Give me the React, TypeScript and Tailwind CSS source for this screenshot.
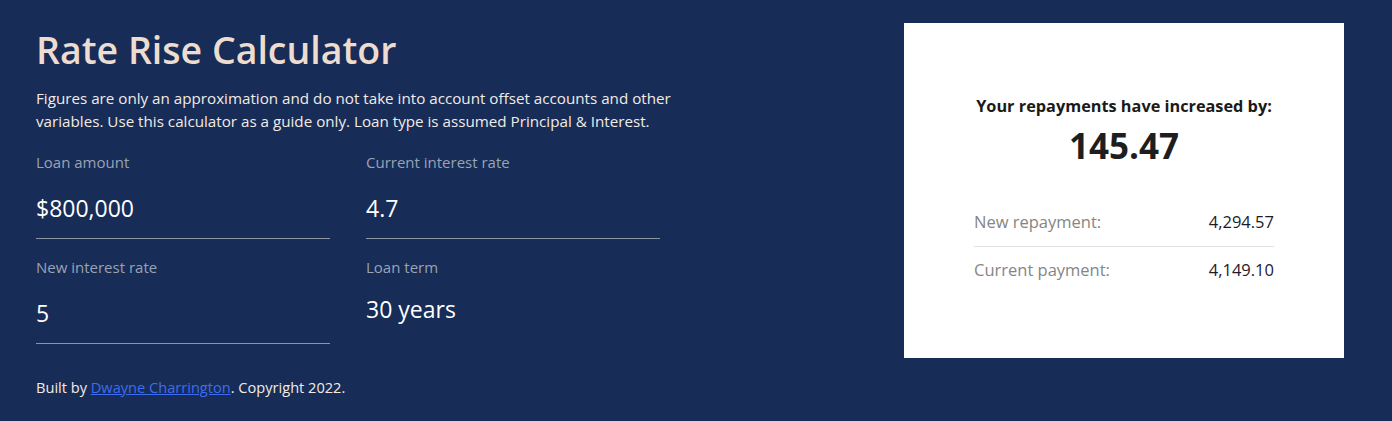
import React from 'react'

const FIELDS = [
  { label: 'Loan amount', value: '$800,000', underline: true },
  { label: 'Current interest rate', value: '4.7', underline: true },
  { label: 'New interest rate', value: '5', underline: true },
  { label: 'Loan term', value: '30 years', underline: false },
]

function Field({ label, value, underline }: { label: string; value: string; underline: boolean }) {
  return (
    <div className="flex flex-col">
      <label className="text-[15px] leading-[20px] text-[#9aa3b5]">{label}</label>
      <div
        className={
          underline
            ? 'mt-[11px] h-[56px] pt-[10px] text-[23px] leading-[30px] text-white border-b border-[#8c95a6]'
            : 'mt-[11px] h-[56px] pt-[6px] text-[23px] leading-[30px] text-white'
        }
      >
        {value}
      </div>
    </div>
  )
}

export default function App() {
  return (
    <div
      className="min-h-[421px] w-full bg-[#172c57] flex justify-between pl-[36px] pr-[48px] pt-[23px]"
      style={{ fontFamily: '"Open Sans", "Noto Sans", sans-serif' }}
    >
      {/* Calculator form */}
      <div className="w-[660px] flex flex-col">
        <h1 className="text-[37.5px] leading-[50px] font-semibold text-[#eddcd0] mt-[2px]">Rate Rise Calculator</h1>
        <p className="mt-[12px] text-[15.2px] leading-[23px] text-[#f2ebe4]">
          Figures are only an approximation and do not take into account offset accounts and other variables. Use
          this calculator as a guide only. Loan type is assumed Principal &amp; Interest.
        </p>
        <div className="mt-[19px] grid grid-cols-2 gap-x-[36px] gap-y-[18px] w-[624px]">
          {FIELDS.map((f) => (
            <Field key={f.label} {...f} />
          ))}
        </div>
        <p className="mt-[33px] text-[14.6px] leading-[20px] text-[#f2ebe4]">
          Built by{' '}
          <a href="#" className="text-[#3d6cf0] underline">
            Dwayne Charrington
          </a>
          . Copyright 2022.
        </p>
      </div>

      {/* Result card */}
      <div className="w-[440px] h-[335px] bg-white flex flex-col items-center pt-[71px]">
        <h2 className="text-[16.3px] leading-[24px] font-bold text-[#1a1a1a]">Your repayments have increased by:</h2>
        <div className="mt-[5px] text-[35px] leading-[46px] font-bold text-[#1e1e1e]">145.47</div>
        <div className="mt-[32px] w-[300px] flex flex-col">
          <div className="flex justify-between items-center h-[46px] pb-[2px] border-b border-[#e3e3e3] text-[16.5px]">
            <span className="text-[#858585]">New repayment:</span>
            <span className="text-[#1b1b2b]">4,294.57</span>
          </div>
          <div className="flex justify-between items-center h-[46px] text-[16.5px]">
            <span className="text-[#858585]">Current payment:</span>
            <span className="text-[#1b1b2b]">4,149.10</span>
          </div>
        </div>
      </div>
    </div>
  )
}
